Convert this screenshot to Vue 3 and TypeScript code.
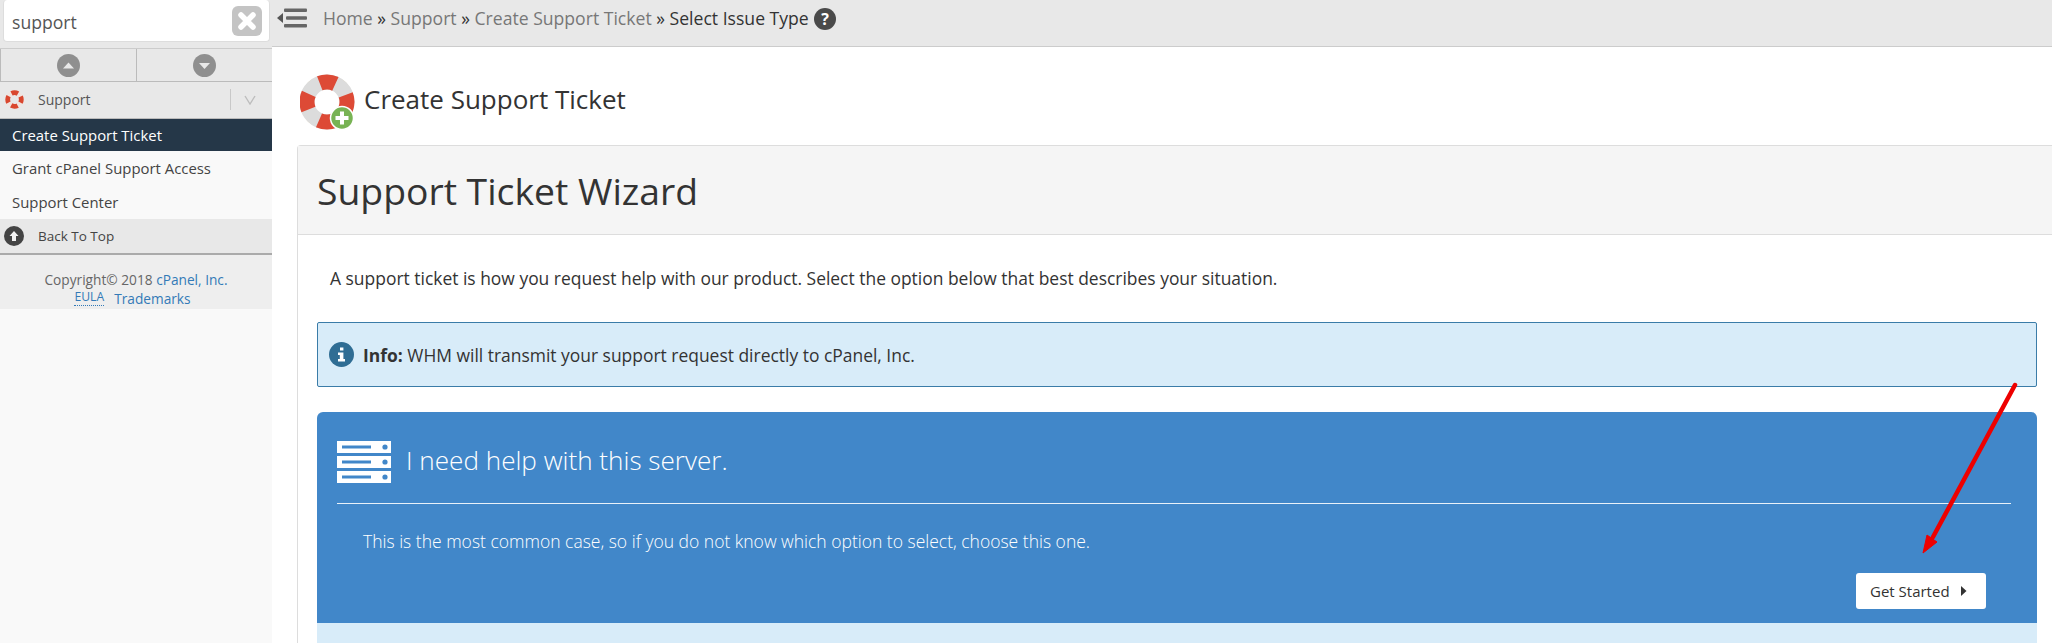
<script setup lang="ts">
const crumbs: string[] = ['Home', 'Support', 'Create Support Ticket']
const navItems: { label: string; active: boolean }[] = [
  { label: 'Create Support Ticket', active: true },
  { label: 'Grant cPanel Support Access', active: false },
  { label: 'Support Center', active: false },
]
</script>

<template>
  <div class="page">
    <aside class="sidebar">
      <div class="search-wrap">
        <div class="search">
          <span class="search-text">support</span>
          <span class="clear">
            <svg width="22" height="22" viewBox="0 0 22 22"><path d="M5 5 L17 17 M17 5 L5 17" stroke="#fff" stroke-width="5.5" stroke-linecap="round" /></svg>
          </span>
        </div>
      </div>
      <div class="arrows">
        <div class="arrow-cell">
          <svg width="23" height="23" viewBox="0 0 23 23"><circle cx="11.5" cy="11.5" r="11.5" fill="#8f8f8f" /><path d="M6 14.5 L11.5 8.5 L17 14.5 Z" fill="#e8e8e8" /></svg>
        </div>
        <div class="arrow-cell">
          <svg width="23" height="23" viewBox="0 0 23 23"><circle cx="11.5" cy="11.5" r="11.5" fill="#8f8f8f" /><path d="M6 9 L11.5 15 L17 9 Z" fill="#e8e8e8" /></svg>
        </div>
      </div>
      <div class="group">
        <svg class="group-icon" width="19" height="19" viewBox="0 0 19 19">
          <circle cx="9.5" cy="9.5" r="6.8" fill="none" stroke="#f0e4e0" stroke-width="4.8" />
          <circle cx="9.5" cy="9.5" r="6.8" fill="none" stroke="#d9472f" stroke-width="4.8" stroke-dasharray="6.7 4" stroke-dashoffset="3.35" />
        </svg>
        <span class="group-label">Support</span>
        <span class="group-sep"></span>
        <svg class="chevron" width="12" height="10" viewBox="0 0 12 10"><path d="M1 1 L6 9 L11 1" fill="none" stroke="#bdbdbd" stroke-width="1.4" /></svg>
      </div>
      <nav class="nav">
        <a v-for="item in navItems" :key="item.label" class="nav-item" :class="{ active: item.active }">{{ item.label }}</a>
      </nav>
      <div class="back">
        <svg class="back-icon" width="20" height="20" viewBox="0 0 20 20"><circle cx="10" cy="10" r="10" fill="#444" /><path d="M10 5 L14.5 10 H12 V15 H8 V10 H5.5 Z" fill="#f2f2f2" /></svg>
        <span>Back To Top</span>
      </div>
      <footer class="foot">
        <div>Copyright© 2018 <span class="link">cPanel, Inc.</span></div>
        <div class="foot-links"><span class="link eula">EULA</span><span class="link">Trademarks</span></div>
      </footer>
    </aside>

    <main class="main">
      <header class="topbar">
        <svg class="menu" width="30" height="20" viewBox="0 0 30 20">
          <path d="M0 10 L6 5 V15 Z" fill="#555" />
          <rect x="7" y="0.5" width="23" height="3.6" rx="1" fill="#666" />
          <rect x="9" y="8.2" width="21" height="3.6" rx="1" fill="#666" />
          <rect x="7" y="15.9" width="23" height="3.6" rx="1" fill="#666" />
        </svg>
        <div class="crumbs">
          <template v-for="c in crumbs" :key="c"><span class="crumb">{{ c }}</span><span class="sep"> » </span></template>
          <span class="current">Select Issue Type</span>
          <svg class="help" width="22" height="22" viewBox="0 0 22 22"><circle cx="11" cy="11" r="11" fill="#4a4a4a" /><text x="11" y="16.5" text-anchor="middle" class="help-q">?</text></svg>
        </div>
      </header>

      <div class="content">
        <div class="title-row">
          <svg class="title-icon" width="58" height="58" viewBox="0 0 58 58">
            <rect x="5" y="5" width="44" height="46" rx="13" fill="none" stroke="#f5d77a" stroke-width="1.5" />
            <circle cx="27" cy="28" r="20" fill="none" stroke="#dcdcdc" stroke-width="15" />
            <circle cx="27" cy="28" r="20" fill="none" stroke="#dd4a36" stroke-width="15" stroke-dasharray="16 15.42" stroke-dashoffset="8" />
            <circle cx="42" cy="44" r="11.5" fill="#78b354" stroke="#fff" stroke-width="1.5" />
            <path d="M42 37.5 V50.5 M35.5 44 H48.5" stroke="#fff" stroke-width="4" />
          </svg>
          <h1 class="page-title">Create Support Ticket</h1>
        </div>

        <section class="panel">
          <div class="panel-head"><h2>Support Ticket Wizard</h2></div>
          <div class="panel-body">
            <p class="intro">A support ticket is how you request help with our product. Select the option below that best describes your situation.</p>
            <div class="info">
              <svg width="25" height="25" viewBox="0 0 25 25"><circle cx="12.5" cy="12.5" r="12.5" fill="#2f6d94" /><rect x="11" y="5.5" width="3.4" height="3" fill="#fff" /><path d="M9 10.5 H14.4 V17 H16 V19.5 H9 V17 H10.8 V13 H9 Z" fill="#fff" /></svg>
              <span><b>Info:</b> WHM will transmit your support request directly to cPanel, Inc.</span>
            </div>
            <div class="card">
              <div class="card-head">
                <svg width="54" height="42" viewBox="0 0 54 42">
                  <g v-for="y in [0, 15, 30]" :key="y">
                    <rect x="0" :y="y" width="54" height="12" fill="#fff" />
                    <rect x="5" :y="y + 4.5" width="29" height="3" fill="#4187c9" />
                    <circle cx="48" :cy="y + 6" r="2.6" fill="#4187c9" />
                  </g>
                </svg>
                <span class="card-title">I need help with this server.</span>
              </div>
              <p class="card-text">This is the most common case, so if you do not know which option to select, choose this one.</p>
              <div class="card-actions">
                <button class="start">Get Started<svg width="7" height="10" viewBox="0 0 7 10"><path d="M1 0 L6.5 5 L1 10 Z" fill="#333" /></svg></button>
              </div>
            </div>
            <div class="next"></div>
          </div>
        </section>
      </div>
    </main>

    <svg class="annot" width="2052" height="643" viewBox="0 0 2052 643">
      <path d="M2015 385 L1933 537" stroke="#ee0000" stroke-width="4.5" stroke-linecap="round" />
      <path d="M1923 553 L1927 535 L1937 542 Z" fill="#ee0000" stroke="#ee0000" stroke-width="1" />
    </svg>
  </div>
</template>

<style>
html, body { margin: 0; background: #fff; overflow: hidden; }
</style>

<style scoped>
.page {
  position: relative;
  display: flex;
  width: 2052px;
  height: 643px;
  overflow: hidden;
  font-family: "Open Sans", sans-serif;
  color: #333;
  background: #fff;
}
.sidebar {
  width: 272px;
  flex: none;
  background: #f9f9f9;
  font-size: 14px;
  display: flex;
  flex-direction: column;
}
.search-wrap { background: #e8e8e8; height: 48px; box-sizing: border-box; padding: 0 0 6px 3px; }
.search {
  height: 42px;
  width: 267px;
  box-sizing: border-box;
  background: #fff;
  border: 1px solid #ddd;
  border-top: none;
  border-radius: 4px;
  display: flex;
  align-items: center;
  justify-content: space-between;
  padding: 0 7px 0 8px;
  font-size: 17.6px;
  color: #555;
}
.search-text { margin-top: 2px; }
.clear {
  width: 30px; height: 30px; border-radius: 6px; background: #c4c4c4;
  display: flex; align-items: center; justify-content: center;
}
.arrows { display: flex; height: 34px; background: #e8e8e8; border-bottom: 1px solid #bbb; box-sizing: border-box; border-top: 1px solid #ccc; }
.arrow-cell { flex: 1; display: flex; align-items: center; justify-content: center; border-left: 1px solid #bbb; }
.arrow-cell:nth-child(2) { margin-left: -1px; }
.group {
  height: 37px; box-sizing: border-box; background: #e8e8e8; border-bottom: 1px solid #bbb;
  display: flex; align-items: center; padding: 0 0 1px 5px; color: #555; font-size: 14px;
}
.group-label { margin-left: 14px; flex: 1; }
.group-sep { width: 1px; height: 21px; background: #c8c8c8; }
.chevron { margin: 0 16px 0 13px; }
.nav { display: flex; flex-direction: column; }
.nav-item { height: 34px; display: flex; align-items: center; padding-left: 12px; color: #444; font-size: 14.9px; }
.nav-item.active { height: 32px; background: #253748; color: #fff; }
.back {
  height: 36px; box-sizing: border-box; background: #e8e8e8; border-bottom: 2px solid #aaa;
  display: flex; align-items: center; padding-left: 4px; color: #444; font-size: 13.5px;
}
.back-icon { margin-right: 14px; }
.foot { background: #eee; height: 54px; box-sizing: border-box; padding-top: 15px; text-align: center; font-size: 13.7px; line-height: 19px; color: #666; }
.foot-links { display: flex; justify-content: center; gap: 10px; padding-right: 7px; }
.link { color: #337ab7; }
.eula { border-bottom: 1px dotted #337ab7; line-height: 16px; height: 16px; font-size: 12.2px; }

.main { flex: 1; min-width: 0; display: flex; flex-direction: column; }
.topbar {
  height: 47px; flex: none; box-sizing: border-box; background: #e8e8e8; border-bottom: 1px solid #ccc;
  display: flex; align-items: flex-start; padding: 7px 0 0 5px;
}
.menu { flex: none; margin-top: 1px; }
.crumbs { margin-left: 16px; font-size: 17.6px; line-height: 24px; display: flex; align-items: center; white-space: pre; color: #333; margin-top: -1px; }
.crumb { color: #777; }
.current { color: #333; }
.help { margin: 2px 0 0 5px; }
.help-q { font: 700 16px "Open Sans", sans-serif; fill: #fff; }

.content { padding: 0 0 0 25px; flex: 1; }
.title-row { display: flex; align-items: center; height: 98px; box-sizing: border-box; padding-top: 6px; margin-left: 3px; }
.title-icon { flex: none; margin: 8px 6px 0 0; }
.page-title { margin: 0; font-size: 26px; font-weight: 400; color: #333; }
.panel { border: 1px solid #ddd; border-right: none; border-radius: 4px 0 0 0; }
.panel-head { height: 89px; box-sizing: border-box; background: #f5f5f5; border-bottom: 1px solid #ddd; display: flex; align-items: center; padding-left: 19px; }
.panel-head h2 { margin: 0; font-size: 37.3px; font-weight: 400; color: #333; }
.panel-body { padding: 0 15px 0 19px; }
.intro { margin: 0; height: 87px; display: flex; align-items: center; font-size: 17.45px; padding: 0 0 2px 13px; box-sizing: border-box; }
.info {
  height: 65px; box-sizing: border-box; background: #d8ecf9; border: 1px solid #3a7ca8; border-radius: 2px;
  display: flex; align-items: center; gap: 9px; padding-left: 11px; font-size: 17.45px;
}
.card { margin-top: 25px; height: 211px; box-sizing: border-box; background: #4187c9; border-radius: 6px 6px 0 0; color: #fff; padding: 29px 26px 0 20px; }
.card-head { display: flex; align-items: center; gap: 15px; padding-bottom: 20px; border-bottom: 1px solid #e8f1f9; }
.card-title { font-size: 26.1px; font-weight: 300; margin-bottom: 5px; }
.card-text { margin: 0; padding: 25px 0 0 26px; font-size: 17.5px; line-height: 24px; font-weight: 300; }
.card-actions { display: flex; justify-content: flex-end; margin-top: 20px; padding-right: 25px; }
.start {
  width: 130px; height: 36px; background: #fff; border: none; border-radius: 3px; font: 400 15px "Open Sans", sans-serif; color: #333;
  display: flex; align-items: center; justify-content: flex-start; gap: 10px; padding: 0 0 0 14px;
}
.next { height: 40px; background: #d8ecf9; }
.annot { position: absolute; left: 0; top: 0; pointer-events: none; }
</style>
